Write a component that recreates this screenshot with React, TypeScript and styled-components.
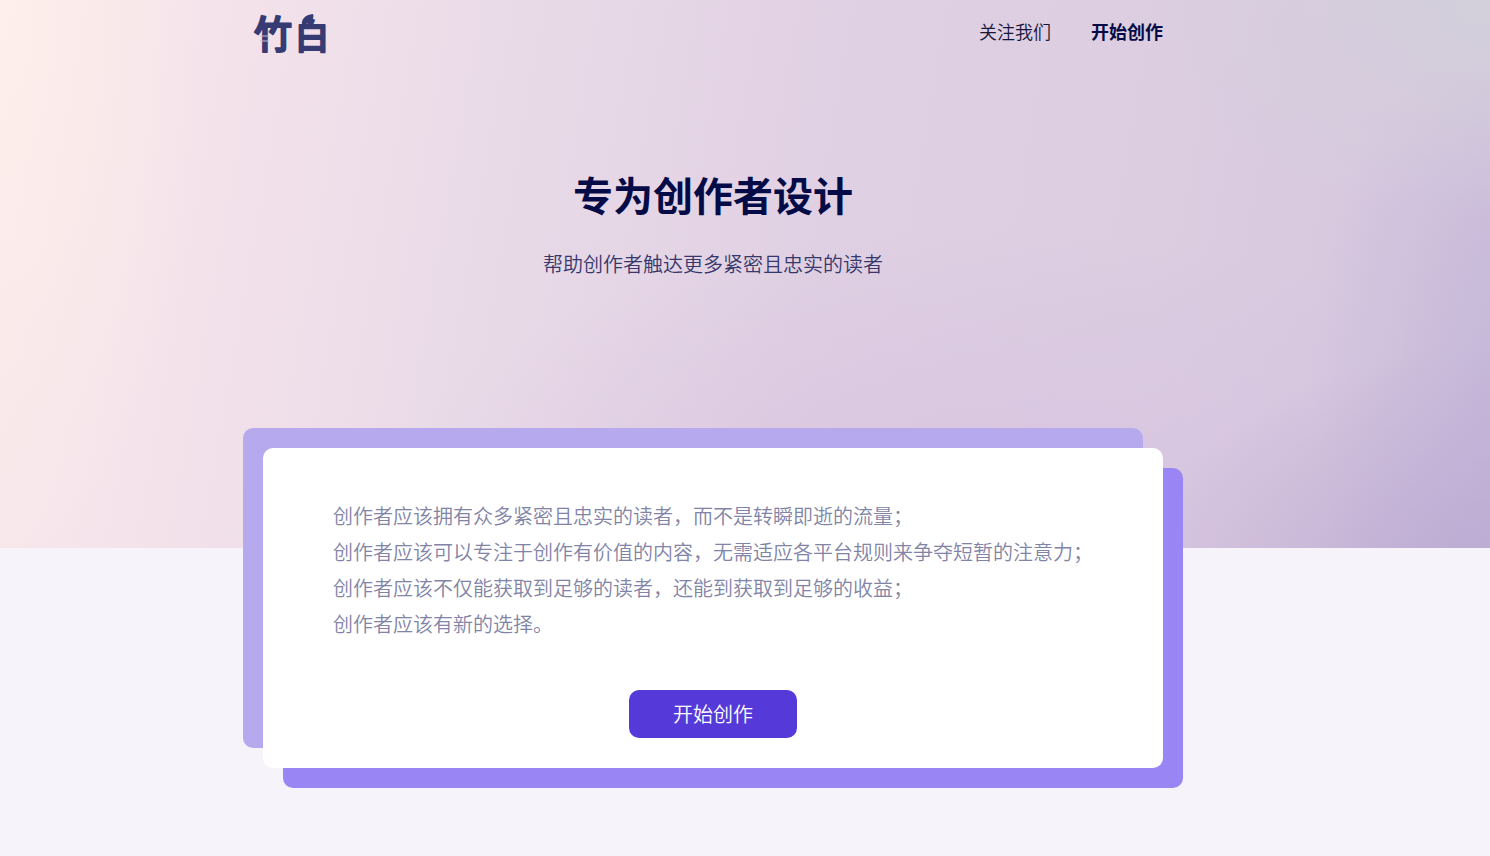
import React from 'react';
import styled, { createGlobalStyle } from 'styled-components';

const GlobalStyle = createGlobalStyle`
  *, *::before, *::after { box-sizing: border-box; }
  body {
    margin: 0;
    background: #f6f3fb;
    color: #050b47;
    font-family: "Noto Sans CJK SC", sans-serif;
    font-weight: 350;
  }
  h1, p { margin: 0; }
`;

const Hero = styled.div`
  padding: 0 64px 266px 0;
  background:
    radial-gradient(ellipse 22% 40% at 100% 0%, rgba(211, 208, 219, 1) 0%, rgba(211, 208, 219, 0) 100%),
    radial-gradient(ellipse 16% 70% at 104% 70%, rgba(184, 170, 214, 0.6) 0%, rgba(190, 176, 216, 0) 100%),
    radial-gradient(ellipse 26% 50% at 102% 112%, rgba(174, 154, 202, 0.7) 0%, rgba(186, 166, 210, 0) 100%),
    radial-gradient(ellipse 40% 50% at 66% 92%, rgba(211, 190, 222, 0.6) 0%, rgba(211, 190, 222, 0) 100%),
    radial-gradient(ellipse 14% 110% at 0% 0%, rgba(255, 241, 234, 0.7) 0%, rgba(255, 241, 234, 0) 100%),
    linear-gradient(100deg, #fae9ec 0%, #f3e2ea 16%, #e9dae8 34%, #e0d0e3 54%, #dccde1 76%, #d2c3dc 100%);
`;

const Container = styled.div`
  width: 100%;
  max-width: 900px;
  margin: 0 auto;
`;

const Header = styled(Container).attrs({ as: 'header' })`
  display: flex;
  align-items: center;
  justify-content: space-between;
  height: 66px;
`;

const HomeLink = styled.a`
  display: flex;
  margin-left: -12px;
`;

const Nav = styled.nav`
  display: flex;
  gap: 40px;
  padding-bottom: 4px;
`;

const NavLink = styled.a<{ $strong?: boolean }>`
  color: ${({ $strong }) => ($strong ? '#050b47' : '#16163a')};
  font-size: 18px;
  line-height: 28px;
  font-weight: ${({ $strong }) => ($strong ? 700 : 350)};
  text-decoration: none;
`;

const Intro = styled(Container)`
  padding-top: 100px;
  text-align: center;
`;

const Title = styled.h1`
  font-size: 40px;
  line-height: 56px;
  font-weight: 700;
`;

const Subtitle = styled.p`
  margin-top: 24px;
  color: #36376b;
  font-size: 20px;
  line-height: 36px;
`;

const Main = styled.main`
  margin-top: -100px;
  padding: 0 64px 88px 0;
`;

const Card = styled(Container)`
  position: relative;
  z-index: 0;

  &::before,
  &::after {
    content: '';
    position: absolute;
    z-index: -1;
    width: 100%;
    height: 100%;
    border-radius: 10px;
  }
  &::before {
    top: 20px;
    left: 20px;
    background: #9a85f4;
  }
  &::after {
    top: -20px;
    left: -20px;
    background: #b6a9ee;
  }
`;

const CardBody = styled.section`
  display: flex;
  flex-direction: column;
  align-items: center;
  gap: 48px;
  padding: 50px 70px 30px;
  border-radius: 10px;
  background: #fff;
`;

const Statement = styled.div`
  width: 100%;
  color: #8184a6;
  font-size: 20px;
  line-height: 36px;
`;

const StartButton = styled.button`
  width: 168px;
  height: 48px;
  padding: 0;
  border: 0;
  border-radius: 10px;
  background: #5639d9;
  color: #fff;
  font: inherit;
  font-size: 20px;
  line-height: 48px;
  cursor: pointer;
`;

const LogoText = styled.text<{ $size: number }>`
  fill: #363b73;
  stroke: #363b73;
  stroke-width: 2px;
  stroke-linejoin: round;
  font-family: "Noto Sans CJK SC", sans-serif;
  font-size: ${({ $size }) => $size}px;
  font-weight: 500;
`;

const Logo = () => (
  <svg width="88" height="66" viewBox="0 0 88 66" role="img" aria-label="竹白">
    <LogoText x="3" y="48" $size={38}>竹</LogoText>
    <LogoText x="44" y="49" $size={34}>白</LogoText>
    {/* bamboo joints */}
    <path d="M9 36h9M9 41h9" stroke="#c9bdd3" strokeWidth="1" />
    {/* leaf above the second character */}
    <path d="M51 25C50 19 54 15 62 14C64 19 59 24 51 25Z" fill="#363b73" />
  </svg>
);

const statements = [
  '创作者应该拥有众多紧密且忠实的读者，而不是转瞬即逝的流量；',
  '创作者应该可以专注于创作有价值的内容，无需适应各平台规则来争夺短暂的注意力；',
  '创作者应该不仅能获取到足够的读者，还能到获取到足够的收益；',
  '创作者应该有新的选择。',
];

export default function App() {
  return (
    <>
      <GlobalStyle />
      <Hero>
        <Header>
          <HomeLink href="#"><Logo /></HomeLink>
          <Nav>
            <NavLink href="#follow">关注我们</NavLink>
            <NavLink href="#start" $strong>开始创作</NavLink>
          </Nav>
        </Header>
        <Intro>
          <Title>专为创作者设计</Title>
          <Subtitle>帮助创作者触达更多紧密且忠实的读者</Subtitle>
        </Intro>
      </Hero>
      <Main>
        <Card>
          <CardBody>
            <Statement>
              {statements.map((line) => <p key={line}>{line}</p>)}
            </Statement>
            <StartButton type="button">开始创作</StartButton>
          </CardBody>
        </Card>
      </Main>
    </>
  );
}
